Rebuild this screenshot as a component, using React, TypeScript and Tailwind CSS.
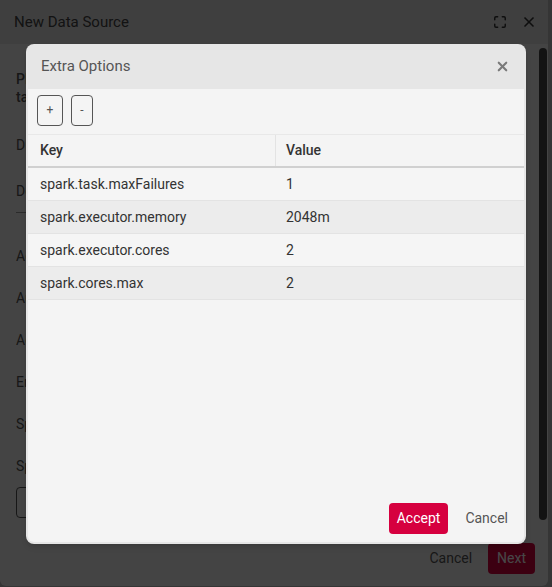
import React from 'react';
import { X, Maximize } from 'lucide-react';

const options = [
  { key: 'spark.task.maxFailures', value: '1' },
  { key: 'spark.executor.memory', value: '2048m' },
  { key: 'spark.executor.cores', value: '2' },
  { key: 'spark.cores.max', value: '2' },
];

const fields = ['Address', 'Authentication', 'Access Key', 'Endpoint', 'Spark Master', 'Spark Version'];

export default function App() {
  return (
    <div className="relative w-[552px] h-[587px] overflow-hidden bg-[#bdbdbd] font-['Roboto',sans-serif]">
      {/* Underlying dialog */}
      <div className="w-[548px] h-[586px] rounded-b-md bg-[#f4f4f4] flex flex-col">
        <div className="h-11 shrink-0 bg-[#e2e2e2] flex items-center justify-between pl-[14px] pr-[11px]">
          <span className="text-[15px] text-[#444]">New Data Source</span>
          <div className="flex items-center gap-[14px] text-[#333]">
            <Maximize size={14} strokeWidth={2.5} />
            <X size={16} strokeWidth={2.5} />
          </div>
        </div>
        <div className="flex-1 flex min-h-0">
          <div className="flex-1 px-4 pt-[26px] text-[14px] text-[#555]">
            <p className="leading-[18px] font-medium">Please provide the details of the new data source,</p>
            <p className="leading-[18px] font-medium">take care with the options below.</p>
            <div className="mt-[32px] h-[14px] leading-[14px]">Display name</div>
            <div className="mt-[32px] h-[14px] leading-[14px]">Description</div>
            <div className="mt-[14px] border-t border-[#999] w-[480px]" />
            <div className="flex flex-col gap-[28px] mt-[36px]">
              {fields.map((f) => (
                <div key={f} className="h-[14px] leading-[14px]">{f}</div>
              ))}
            </div>
            <div className="mt-[14px] h-[31px] w-[120px] rounded border border-[#555]" />
          </div>
          <div className="w-[8px] mr-[1px] mt-[4px] mb-[16px] h-[472px] rounded bg-[#444]" />
        </div>
        <div className="flex justify-end items-center gap-4 pr-[13px] pb-[12px] pt-[21px]">
          <span className="text-[14px] text-[#555]">Cancel</span>
          <div className="h-[31px] px-[9px] rounded bg-[#d6003f] text-white text-[14px] flex items-center">Next</div>
        </div>
      </div>

      {/* Overlay */}
      <div className="absolute inset-0 bg-black/[0.72] flex items-center justify-center">
        <div className="w-[500px] h-[500px] rounded-lg bg-[#e6e6e6] flex flex-col shadow-md">
          <div className="h-[45px] shrink-0 flex items-center justify-between pl-[15px] pr-[16px]">
            <span className="text-[15px] text-[#555]">Extra Options</span>
            <X size={15} strokeWidth={3.4} className="text-[#7a7a7a]" />
          </div>
          <div className="flex-1 mx-[2px] mb-[2px] rounded-b-md bg-[#f4f4f4] flex flex-col">
            <div className="flex gap-2 pt-[6px] pl-[9px]">
              <button className="w-[26px] h-[31px] rounded border border-[#555] text-[12px] text-[#555] flex items-center justify-center">+</button>
              <button className="w-[22px] h-[31px] rounded border border-[#555] text-[12px] text-[#555] flex items-center justify-center">-</button>
            </div>
            <div className="mt-[8px] border-t border-[#e8e8e8] text-[14px]">
              <div className="flex h-[33px] border-b-2 border-[#d0d0d0] font-medium text-[#333]">
                <div className="w-[248px] border-r border-[#e3e3e3] flex items-center pl-3">Key</div>
                <div className="flex-1 flex items-center pl-[10px]">Value</div>
              </div>
              {options.map((o, i) => (
                <div
                  key={o.key}
                  className={`flex h-[33px] border-b border-[#e3e3e3] text-[#333] ${i % 2 === 1 ? 'bg-[#ececec]' : 'bg-[#f5f5f5]'}`}
                >
                  <div className="w-[248px] flex items-center pl-3 pt-[1px]">{o.key}</div>
                  <div className="flex-1 flex items-center pl-[10px] pt-[1px]">{o.value}</div>
                </div>
              ))}
            </div>
            <div className="mt-auto flex justify-end gap-[9px] pr-[8px] pb-[8px]">
              <button className="h-[31px] px-2 rounded bg-[#d6003f] text-white text-[14px]">Accept</button>
              <button className="h-[31px] px-2 text-[#555] text-[14px]">Cancel</button>
            </div>
          </div>
        </div>
      </div>
    </div>
  );
}
